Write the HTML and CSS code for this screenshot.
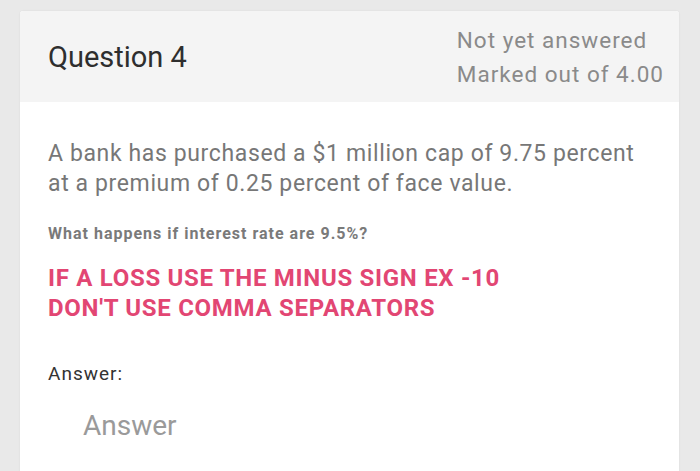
FILE: index.html
```html
<!DOCTYPE html>
<html>
<head>
<meta charset="utf-8">
<link rel="stylesheet" href="styles.css">
</head>
<body>
<div class="card">
  <div class="card-header">
    <h2 class="q-title">Question 4</h2>
    <div class="q-state">
      <div class="q-line">Not yet answered</div>
      <div class="q-line">Marked out of 4.00</div>
    </div>
  </div>
  <div class="card-body">
    <p class="q-text">A bank has purchased a $1 million cap of 9.75 percent at a premium of 0.25 percent of face value.</p>
    <p class="q-sub">What happens if interest rate are 9.5%?</p>
    <p class="q-note">IF A LOSS USE THE MINUS SIGN EX -10<br>DON'T USE COMMA SEPARATORS</p>
    <div class="answer-label">Answer:</div>
    <div class="answer-input">Answer</div>
  </div>
</div>
</body>
</html>
```
FILE: styles.css
```css
html, body {
  margin: 0;
  padding: 0;
  background: #e9e9e9;
  font-family: Roboto, "Noto Sans", sans-serif;
}
body {
  padding: 11px 21px 0 20px;
  height: 471px;
  box-sizing: border-box;
  overflow: hidden;
}
.card {
  background: #ffffff;
  border-radius: 3px 3px 0 0;
  height: 470px;
  box-shadow: 0 0 2px rgba(0,0,0,0.08);
}
.card-header {
  background: #f4f4f4;
  height: 91px;
  display: flex;
  justify-content: space-between;
  align-items: flex-start;
  padding: 0 15px 0 28px;
  border-radius: 3px 3px 0 0;
}
.q-title {
  margin: 28px 0 0 0;
  font-weight: 400;
  font-size: 29px;
  color: #2e2e2e;
  line-height: 36px;
}
.q-state {
  margin-top: 12px;
  color: #8a8a8a;
  font-size: 22.5px;
  letter-spacing: 1px;
  line-height: 34px;
}
.card-body {
  padding: 0 28px;
}
.q-text {
  margin: 37px 0 0 0;
  font-size: 23px;
  letter-spacing: 0.62px;
  line-height: 30px;
  color: #777777;
  width: 610px;
}
.q-sub {
  margin: 25px 0 0 0;
  font-size: 16px;
  font-weight: 700;
  letter-spacing: 1px;
  color: #7a7a7a;
  line-height: 20px;
}
.q-note {
  margin: 19px 0 0 0;
  font-size: 24px;
  font-weight: 700;
  letter-spacing: 0.7px;
  color: #e24673;
  line-height: 30px;
}
.answer-label {
  margin-top: 39px;
  font-size: 19px;
  letter-spacing: 1px;
  color: #333333;
  line-height: 24px;
}
.answer-input {
  margin: 23px 0 0 35px;
  font-size: 28px;
  color: #9a9a9a;
  line-height: 34px;
}
```
